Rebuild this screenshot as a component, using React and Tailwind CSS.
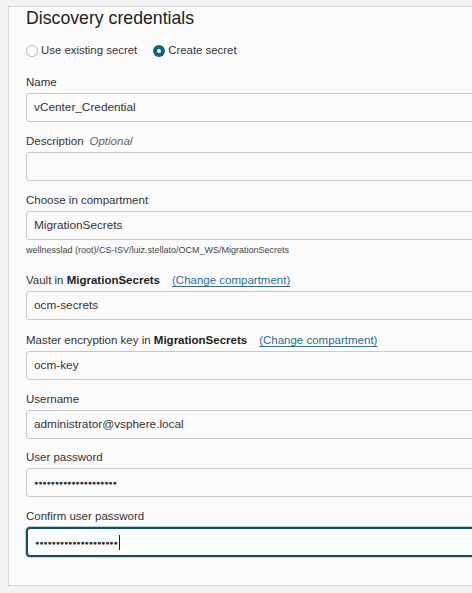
import React from "react";

const font = { fontFamily: '"Liberation Sans", Arial, sans-serif' };

const Label = ({ children }) => (
  <div className="h-[16px] pt-[2px] flex items-center text-[11.5px] text-[#333] whitespace-nowrap">{children}</div>
);

const Input = ({ value, focused, password }) => (
  <div
    className={
      focused
        ? "mt-[3px] h-[30px] w-[470px] rounded-[4px] border-2 border-[#1d4b60] bg-[#fcfdfe] flex items-center pl-[7px] shadow-[0_0_0_1px_#b9d3df]"
        : "mt-[3px] h-[29px] w-[470px] rounded-[3px] border border-[#c9c9c9] bg-[#fcfcfc] flex items-center pl-[7px]"
    }
  >
    {password ? (
      <span className="flex items-center">
        <span className="text-[7px] leading-none tracking-[-0.1px] text-[#333]">{"●".repeat(20)}</span>
        {focused && <span className="ml-[1px] h-[15px] w-[1px] bg-[#222]" />}
      </span>
    ) : (
      <span className="text-[11.8px] text-[#333]">{value}</span>
    )}
  </div>
);

const Radio = ({ checked, label }) => (
  <div className="flex items-center gap-[3px]">
    {checked ? (
      <span className="w-[12px] h-[12px] rounded-full bg-[#17607f] flex items-center justify-center">
        <span className="w-[4px] h-[4px] rounded-full bg-white" />
      </span>
    ) : (
      <span className="w-[12px] h-[12px] rounded-full border border-[#b5b5b5] bg-white" />
    )}
    <span className="text-[11.4px] text-[#333]">{label}</span>
  </div>
);

const Field = ({ label, children, className = "mt-[11px]" }) => (
  <div className={className}>
    <Label>{label}</Label>
    {children}
  </div>
);

const Link = () => (
  <span className="ml-[12px] text-[#2f6e8e] underline underline-offset-2">(Change compartment)</span>
);

export default function App() {
  return (
    <div className="w-[472px] h-[593px] overflow-hidden bg-[#f2f2f2]" style={font}>
      <div className="mt-[6px] ml-[8px] w-[500px] h-[580px] border border-[#d6d6d6] bg-[#fcfcfc] pl-[17px]">
        <h1 className="text-[17.7px] leading-[22px] text-[#222]">Discovery credentials</h1>
        <div className="mt-[14px] h-[16px] flex items-center gap-[16px]">
          <Radio label="Use existing secret" />
          <Radio checked label="Create secret" />
        </div>

        <Field label="Name" className="mt-[15px]">
          <Input value="vCenter_Credential" />
        </Field>
        <Field
          label={
            <>
              Description <span className="ml-[6px] italic text-[#666]">Optional</span>
            </>
          }
        >
          <Input value="" />
        </Field>
        <Field label="Choose in compartment">
          <Input value="MigrationSecrets" />
        </Field>
        <div className="mt-[4px] text-[9px] leading-[12px] text-[#444]">
          wellnesslad (root)/CS-ISV/luiz.stellato/OCM_WS/MigrationSecrets
        </div>
        <Field
          className="mt-[16px]"
          label={
            <>
              Vault in&nbsp;<b className="font-bold text-[#222]">MigrationSecrets</b>
              <Link />
            </>
          }
        >
          <Input value="ocm-secrets" />
        </Field>
        <Field
          className="mt-[12px]"
          label={
            <>
              Master encryption key in&nbsp;<b className="font-bold text-[#222]">MigrationSecrets</b>
              <Link />
            </>
          }
        >
          <Input value="ocm-key" />
        </Field>
        <Field label="Username">
          <Input value="administrator@vsphere.local" />
        </Field>
        <Field label="User password" className="mt-[10px]">
          <Input password />
        </Field>
        <Field label="Confirm user password" className="mt-[11px]">
          <Input password focused />
        </Field>
      </div>
    </div>
  );
}
